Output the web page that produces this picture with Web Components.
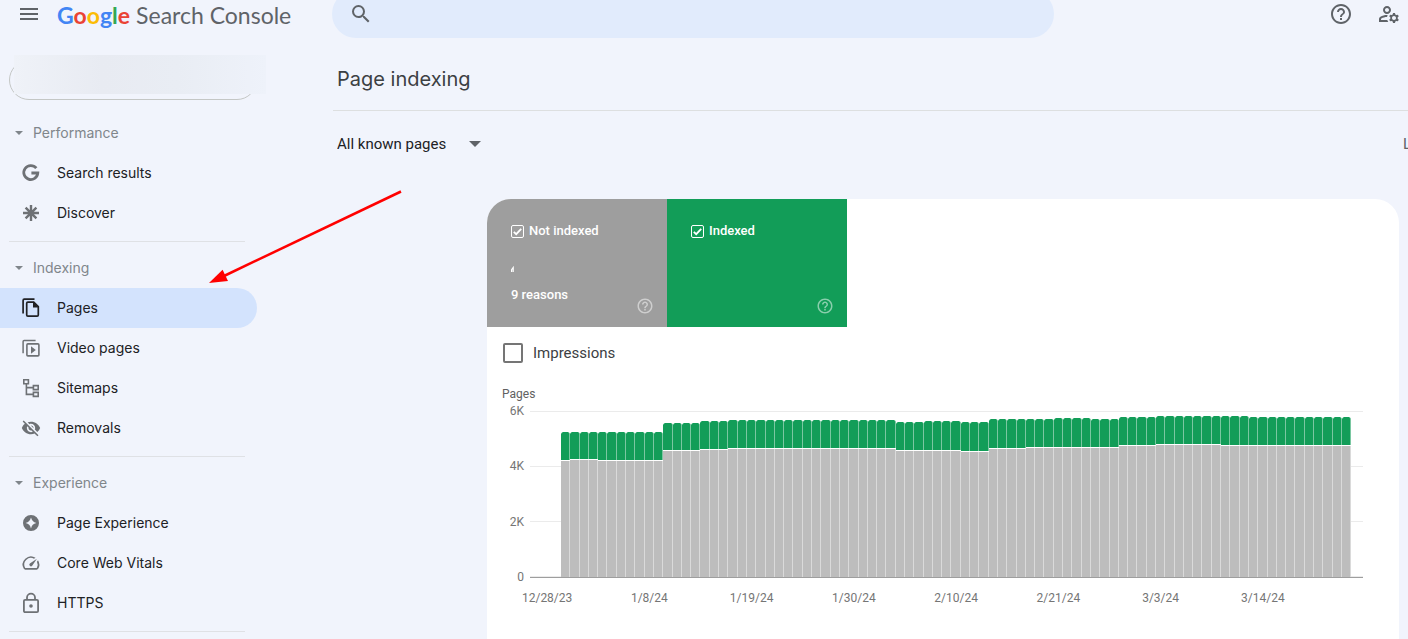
<!DOCTYPE html>
<html lang="en">
<head>
<meta charset="utf-8">
<meta name="viewport" content="width=device-width, initial-scale=1">
<title>Google Search Console</title>
<style>
  body { margin: 0; background: #f1f4fc; font-family: Roboto, "Liberation Sans", sans-serif; color: #202124; }
</style>
</head>
<body>
<gsc-app>
  <gsc-header slot="header"></gsc-header>
  <gsc-nav slot="nav">
    <nav-section heading="Performance">
      <nav-item icon="google">Search results</nav-item>
      <nav-item icon="asterisk">Discover</nav-item>
    </nav-section>
    <nav-section heading="Indexing">
      <nav-item icon="pages" active>Pages</nav-item>
      <nav-item icon="video">Video pages</nav-item>
      <nav-item icon="sitemap">Sitemaps</nav-item>
      <nav-item icon="hidden">Removals</nav-item>
    </nav-section>
    <nav-section heading="Experience">
      <nav-item icon="star">Page Experience</nav-item>
      <nav-item icon="speed">Core Web Vitals</nav-item>
      <nav-item icon="lock">HTTPS</nav-item>
    </nav-section>
  </gsc-nav>
  <page-heading>Page indexing</page-heading>
  <page-filter></page-filter>
  <index-card>
    <metric-tile slot="tiles" label="Not indexed" style="--tile: #9e9e9e">
      <svg slot="value" width="4" height="6" viewBox="0 0 4 6" aria-hidden="true"><path d="M2.6 0 0 3.4V6h1.4V3.6h.4V6h1V0z" fill="#fff"/></svg>
      9 reasons
    </metric-tile>
    <metric-tile slot="tiles" label="Indexed" style="--tile: #129d58"></metric-tile>
    <bar-chart></bar-chart>
  </index-card>
  <pointer-arrow slot="overlay"></pointer-arrow>
</gsc-app>

<script>
const ICONS = {
  menu: '<path d="M3 18h18v-2H3zm0-5h18v-2H3zm0-7v2h18V6z"/>',
  search: '<path d="M15.5 14h-.79l-.28-.27A6.47 6.47 0 0 0 16 9.5 6.5 6.5 0 1 0 9.5 16c1.61 0 3.09-.59 4.23-1.57l.27.28v.79l5 4.99L20.49 19zm-6 0C7.01 14 5 11.99 5 9.5S7.01 5 9.5 5 14 7.01 14 9.5 11.99 14 9.5 14z"/>',
  help: '<path d="M11 18h2v-2h-2v2zm1-16C6.48 2 2 6.48 2 12s4.48 10 10 10 10-4.48 10-10S17.52 2 12 2zm0 18c-4.41 0-8-3.59-8-8s3.59-8 8-8 8 3.59 8 8-3.59 8-8 8zm0-14c-2.21 0-4 1.79-4 4h2c0-1.1.9-2 2-2s2 .9 2 2c0 2-3 1.75-3 5h2c0-2.25 3-2.5 3-5 0-2.21-1.79-4-4-4z"/>',
  manage: '<path d="M4 18v-.65c0-.34.16-.66.41-.81C6.1 15.53 8.03 15 10 15c.03 0 .05 0 .08.01.1-.7.3-1.37.59-1.98-.22-.02-.44-.03-.67-.03-2.42 0-4.68.67-6.61 1.82-.88.52-1.39 1.5-1.39 2.53V20h9.26c-.42-.6-.75-1.28-.97-2H4zM10 12c2.21 0 4-1.79 4-4s-1.79-4-4-4-4 1.79-4 4 1.79 4 4 4zm0-6c1.1 0 2 .9 2 2s-.9 2-2 2-2-.9-2-2 .9-2 2-2zM20.75 16c0-.22-.03-.42-.06-.63l1.14-1.01-1-1.73-1.45.49c-.32-.27-.68-.48-1.08-.63L18 11h-2l-.3 1.49c-.4.15-.76.36-1.08.63l-1.45-.49-1 1.73 1.14 1.01c-.03.21-.06.41-.06.63s.03.42.06.63l-1.14 1.01 1 1.73 1.45-.49c.32.27.68.48 1.08.63L16 21h2l.3-1.49c.4-.15.76-.36 1.08-.63l1.45.49 1-1.73-1.14-1.01c.03-.21.06-.41.06-.63zM17 18c-1.1 0-2-.9-2-2s.9-2 2-2 2 .9 2 2-.9 2-2 2z"/>',
  google: '<path d="M17.3 7.2A7 7 0 1 0 18.8 12H12.4" fill="none" stroke="currentColor" stroke-width="2.8"/>',
  asterisk: '<path d="M12 4v16M4 12h16M6.6 6.6l10.800 10.800M17.4 6.6 6.6 17.400" fill="none" stroke="currentColor" stroke-width="2.4"/>',
  pages: '<path d="M4.1 17.5V4.4q0-1.200 1.200-1.200H15.500" fill="none" stroke="currentColor" stroke-width="1.7"/><path d="M8.9 6.1h5.8l4.6 4.6v8.3q0 1.200-1.200 1.200H8.900q-1.200 0-1.200-1.200V7.300q0-1.200 1.200-1.200z" fill="none" stroke="currentColor" stroke-width="1.7"/><path d="M14 5.600V11.600h5.600z"/>',
  video: '<path d="M4.1 17.200V5.600q0-1 1-1H16.600" fill="none" stroke="currentColor" stroke-width="1.5"/><rect x="7.9" y="7.9" width="12" height="12" rx="1" fill="none" stroke="currentColor" stroke-width="1.6"/><path d="M12 10.200v7.600l4.800-3.800z"/>',
  sitemap: '<g fill="none" stroke="currentColor" stroke-width="1.6"><path d="M4.8 3.800h4.600v4H4.800zM14.400 9.600h4.800v4h-4.800zM14.400 16.400h4.800v4h-4.800zM7.400 8v10.400h7M7.400 11.600h7"/></g>',
  hidden: '<path transform="translate(2 2) scale(.8333)" d="M12 7c2.76 0 5 2.24 5 5 0 .65-.13 1.26-.36 1.83l2.92 2.92c1.51-1.26 2.7-2.89 3.43-4.75-1.73-4.39-6-7.5-11-7.5-1.4 0-2.74.25-3.98.7l2.16 2.16C10.74 7.13 11.35 7 12 7zM2 4.27l2.28 2.28.46.46C3.08 8.3 1.78 10.02 1 12c1.73 4.39 6 7.5 11 7.5 1.55 0 3.03-.3 4.38-.84l.42.42L19.73 22 21 20.73 3.27 3 2 4.27zM7.53 9.8l1.55 1.55c-.05.21-.08.43-.08.65 0 1.66 1.34 3 3 3 .22 0 .44-.03.65-.08l1.55 1.55c-.67.33-1.41.53-2.2.53-2.76 0-5-2.24-5-5 0-.79.2-1.53.53-2.2zm4.31-.78l3.15 3.15.02-.16c0-1.66-1.34-3-3-3l-.17.01z"/>',
  star: '<path fill-rule="evenodd" d="M12 4a8 8 0 1 0 0 16 8 8 0 0 0 0-16zm0 2.6c.9 3.2 2.2 4.5 5.4 5.4-3.2.9-4.5 2.2-5.4 5.4-.9-3.2-2.2-4.5-5.4-5.4 3.2-.9 4.5-2.2 5.4-5.4z"/>',
  speed: '<path transform="translate(2 2) scale(.8333)" d="M20.38 8.57l-1.23 1.85a8 8 0 0 1-.22 7.58H5.07A8 8 0 0 1 15.58 6.85l1.85-1.23A10 10 0 0 0 3.35 19a2 2 0 0 0 1.72 1h13.85a2 2 0 0 0 1.74-1 10 10 0 0 0-.27-10.44zm-9.79 6.84a2 2 0 0 0 2.83 0l5.66-8.49-8.49 5.66a2 2 0 0 0 0 2.83z"/>',
  lock: '<rect x="4.9" y="8.9" width="14.2" height="12.2" rx="1.2" fill="none" stroke="currentColor" stroke-width="1.8"/><path d="M8 9V6.6a4 4 0 0 1 8 0V9" fill="none" stroke="currentColor" stroke-width="1.8"/><circle cx="12" cy="15" r="1.8"/>',
  caret: '<path d="M6 9h12l-6 6z"/>'
};

class Base extends HTMLElement {
  constructor() { super(); this.attachShadow({ mode: 'open' }); }
  connectedCallback() { this.shadowRoot.innerHTML = this.render(); }
}

customElements.define('gsc-icon', class extends Base {
  render() {
    return `<style>
      :host { display: block; flex: none; width: var(--size, 24px); height: var(--size, 24px); }
      svg { display: block; width: 100%; height: 100%; fill: currentColor; }
    </style><svg viewBox="0 0 24 24" aria-hidden="true">${ICONS[this.getAttribute('name')]}</svg>`;
  }
});

customElements.define('gsc-app', class extends Base {
  render() {
    return `<style>
      :host { display: flex; flex-direction: column; min-height: 100vh; position: relative; overflow: hidden; }
      .body { flex: 1; display: grid; grid-template-columns: 257px minmax(0, 1fr); column-gap: 76px; }
      main { display: flex; flex-direction: column; }
    </style>
    <slot name="header"></slot>
    <div class="body"><slot name="nav"></slot><main><slot></slot></main></div>
    <slot name="overlay"></slot>`;
  }
});

customElements.define('gsc-header', class extends Base {
  render() {
    return `<style>
      :host { display: grid; grid-template-columns: 332px minmax(0, 722px) 1fr; align-items: center; height: 48px; margin-top: -10px; color: #5f6368; }
      button { border: 0; padding: 0; background: none; color: inherit; }
      .brand { display: flex; align-items: center; gap: 16px; padding-left: 17px; }
      .logo { color: #5f6368; text-decoration: none; font: 23px/28px Lato, sans-serif; white-space: nowrap; padding-top: 2px; display: flex; align-items: baseline; gap: 6px; }
      .g { font-weight: 700; }
      .b { color: #4285f4; } .r { color: #ea4335; } .y { color: #fbbc05; } .n { color: #34a853; }
      .search { display: flex; align-items: center; gap: 16px; height: 48px; padding: 0 17px; border-radius: 24px; background: #e1ebfc; }
      input { flex: 1; min-width: 0; border: 0; outline: 0; background: none; font: 16px Roboto, sans-serif; }
      .tools { display: flex; justify-content: flex-end; gap: 24px; padding-right: 7px; }
    </style>
    <div class="brand">
      <button aria-label="Main menu"><gsc-icon name="menu"></gsc-icon></button>
      <a class="logo" href="#"><span class="g"><span class="b">G</span><span class="r">o</span><span class="y">o</span><span class="b">g</span><span class="n">l</span><span class="r">e</span></span><span>Search Console</span></a>
    </div>
    <label class="search"><gsc-icon name="search"></gsc-icon><input type="search" aria-label="Inspect URL"></label>
    <div class="tools">
      <button aria-label="Help"><gsc-icon name="help"></gsc-icon></button>
      <button aria-label="Users and settings"><gsc-icon name="manage"></gsc-icon></button>
    </div>`;
  }
});

customElements.define('gsc-nav', class extends Base {
  render() {
    return `<style>
      :host { display: block; padding-top: 22px; }
      .property { position: relative; height: 40px; margin: 0 0 13px 9px; }
      button { box-sizing: border-box; width: 100%; height: 40px; border: 1px solid #c4c7c5; border-radius: 20px; background: none; }
      .mask { position: absolute; left: 5px; right: -9px; top: -5px; height: 39px; background: linear-gradient(90deg, #eff2f8, #e8ebf2 35%, #e9edf4 65%, #eef2fa); }
    </style>
    <div class="property"><button aria-label="Property"></button><div class="mask"></div></div>
    <nav><slot></slot></nav>`;
  }
});

customElements.define('nav-section', class extends Base {
  render() {
    return `<style>
      :host { display: block; }
      button { display: flex; align-items: center; gap: 6px; height: 40px; border: 0; padding: 0 0 0 11px; background: none; color: #80868b; font: 14px/20px Inter, sans-serif; --size: 16px; }
      hr { border: 0; height: 1px; margin: 8px 12px 6px 9px; background: #dfe1e5; }
    </style>
    <button aria-expanded="true"><gsc-icon name="caret"></gsc-icon>${this.getAttribute('heading')}</button>
    <slot></slot><hr>`;
  }
});

customElements.define('nav-item', class extends Base {
  render() {
    return `<style>
      :host { display: block; }
      a { display: flex; align-items: center; gap: 14px; height: 40px; padding-left: 19px; border-radius: 0 20px 20px 0; color: #202124; text-decoration: none; font: 14px/20px Inter, sans-serif; }
      gsc-icon { color: #6e7175; }
      :host([active]) a { background: #d3e3fd; }
      :host([active]) gsc-icon { color: #202124; }
    </style>
    <a href="#"><gsc-icon name="${this.getAttribute('icon')}"></gsc-icon><slot></slot></a>`;
  }
});

customElements.define('page-heading', class extends Base {
  render() {
    return `<style>
      :host { display: block; padding: 27px 0 17px 4px; border-bottom: 1px solid #dddfe0; }
      h1 { margin: 0; color: #3c4043; font: 20px/28px Inter, sans-serif; }
    </style><h1><slot></slot></h1>`;
  }
});

customElements.define('page-filter', class extends Base {
  render() {
    return `<style>
      :host { display: flex; justify-content: space-between; align-items: center; height: 66px; padding-left: 4px; margin-bottom: 22px; overflow: hidden; }
      .pick { display: grid; align-items: center; color: #202124; }
      select { grid-area: 1 / 1; appearance: none; border: 0; margin: 0; padding: 0 40px 0 0; background: none; color: inherit; font: 15px/24px Roboto, sans-serif; }
      gsc-icon { grid-area: 1 / 1; justify-self: end; pointer-events: none; color: #5f6368; }
      .last { margin-right: -3px; color: #5f6368; font-size: 15px; }
    </style>
    <div class="pick"><select aria-label="Pages shown"><option>All known pages</option></select><gsc-icon name="caret"></gsc-icon></div>
    <span class="last">L</span>`;
  }
});

customElements.define('index-card', class extends Base {
  render() {
    return `<style>
      :host { flex: 1; display: block; margin: 0 9px 0 154px; border-radius: 24px 24px 0 0; background: #fff; overflow: hidden; }
      .tiles { display: flex; }
      label { display: flex; align-items: center; gap: 10px; width: max-content; padding: 14px 16px; color: #3c4043; font-size: 15px; line-height: 24px; }
      input { appearance: none; box-sizing: border-box; width: 20px; height: 20px; margin: 0; border: 2px solid #757575; border-radius: 2px; background: #fff; }
    </style>
    <div class="tiles"><slot name="tiles"></slot></div>
    <label><input type="checkbox">Impressions</label>
    <slot></slot>`;
  }
});

customElements.define('metric-tile', class extends Base {
  render() {
    return `<style>
      :host { box-sizing: border-box; position: relative; display: block; width: 180px; height: 128px; padding: 22px 24px; background: var(--tile); color: #fff; font-size: 13px; font-weight: 500; line-height: 20px; }
      label { display: flex; align-items: center; gap: 5px; }
      .box { display: grid; }
      .box > * { grid-area: 1 / 1; }
      input { appearance: none; box-sizing: border-box; width: 13px; height: 13px; margin: 0; border: 1px solid #fff; border-radius: 2px; }
      .value { box-sizing: border-box; display: flex; align-items: center; height: 44px; padding-top: 12px; }
      gsc-icon { position: absolute; right: 13px; bottom: 12px; --size: 18px; opacity: .5; }
    </style>
    <label><span class="box"><input type="checkbox" checked><svg width="13" height="13" viewBox="0 0 13 13" aria-hidden="true"><path d="M2.8 6.8l2.4 2.4 5-5.4" fill="none" stroke="#fff" stroke-width="1.8"/></svg></span>${this.getAttribute('label')}</label>
    <div class="value"><slot name="value"></slot></div>
    <slot></slot>
    <gsc-icon name="help"></gsc-icon>`;
  }
});

/* Runs of equal days: [days, total height, not-indexed height] on a 166px = 6K scale. */
const RUNS = [
  [1, 145, 116], [3, 145, 117], [7, 145, 116], [4, 154, 126], [3, 156, 127], [18, 157, 128],
  [3, 155, 126], [4, 156, 126], [3, 155, 125], [4, 158, 128], [3, 158, 129], [4, 159, 129],
  [3, 158, 129], [4, 160, 131], [7, 161, 132], [3, 161, 131], [11, 160, 131]
];

customElements.define('bar-chart', class extends Base {
  render() {
    const bars = RUNS.flatMap(([days, total, rest]) =>
      Array(days).fill(`<i style="height:${total}px"><b></b><u style="height:${rest}px"></u></i>`)).join('');
    const dates = ['12/28/23', '1/8/24', '1/19/24', '1/30/24', '2/10/24', '2/21/24', '3/3/24', '3/14/24'];
    return `<style>
      :host { display: block; padding-top: 7px; color: #757575; font-size: 12px; line-height: 16px; }
      .title { padding-left: 15px; margin-bottom: 1px; color: #616161; }
      .area { display: grid; grid-template-columns: 37px 1fr; column-gap: 6px; margin-right: 36px; }
      .scale { display: flex; flex-direction: column; justify-content: space-between; text-align: right; height: 182px; }
      .plot { box-sizing: border-box; height: 167px; margin-top: 8px; padding: 0 12px 0 31px; display: flex; align-items: flex-end; border-bottom: 1px solid #9e9e9e;
        background: linear-gradient(#ebebeb 1px, transparent 1px) 0 0 / 100% 55px; }
      i { flex: 1; display: flex; flex-direction: column; border-radius: 2px 2px 0 0; overflow: hidden; background: #fff; }
      b { flex: 1; margin-bottom: 1px; background: #129d58; border-right: 1px solid #7ac7a1; border-radius: 2px 2px 0 0; }
      u { background: #bdbdbd; border-right: 1px solid #dadada; }
      .dates { display: grid; grid-template-columns: repeat(8, 1fr); margin: 5px 85px 0 9px; text-align: center; }
    </style>
    <div class="title">Pages</div>
    <div class="area">
      <div class="scale"><span>6K</span><span>4K</span><span>2K</span><span>0</span></div>
      <div class="plot">${bars}</div>
    </div>
    <div class="dates">${dates.map(d => `<span>${d}</span>`).join('')}</div>`;
  }
});

customElements.define('pointer-arrow', class extends Base {
  render() {
    return `<style>
      :host { position: absolute; left: 208px; top: 190px; pointer-events: none; }
      svg { display: block; }
    </style><svg width="196" height="96" viewBox="0 0 196 96" aria-hidden="true"><path d="M193 1.500 16 86" stroke="#f00" stroke-width="2.500" fill="none"/><path d="M1 93 14.600 79.800 20 91z" fill="#f00"/></svg>`;
  }
});
</script>
</body>
</html>
